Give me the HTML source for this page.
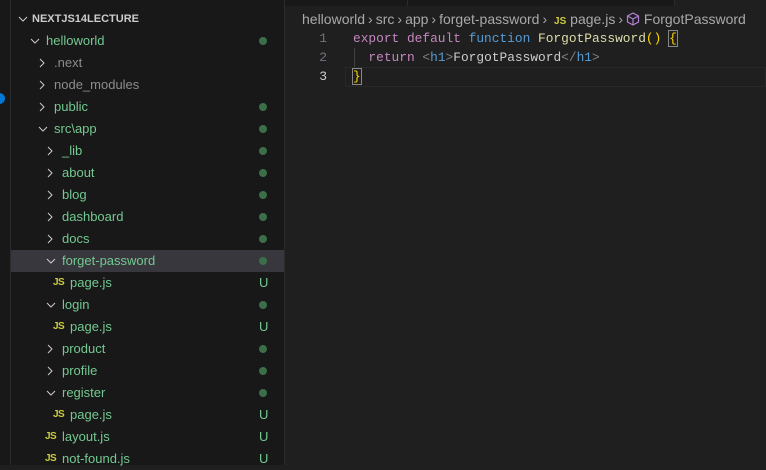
<!DOCTYPE html>
<html><head><meta charset="utf-8"><style>
*{margin:0;padding:0;box-sizing:border-box}
body{width:766px;height:465px;overflow:hidden;background:#1f1f1f;font-family:"Liberation Sans",sans-serif;position:relative}
#act{position:absolute;left:0;top:0;width:11px;height:465px;background:#181818;border-right:1px solid #2b2b2b}
#side{position:absolute;left:11px;top:0;width:274px;height:465px;background:#181818;border-right:1px solid #2b2b2b}
.r{position:absolute;left:0;width:273px;height:22px;line-height:22px;font-size:13px;color:#73c991;white-space:nowrap}
.r.g{color:#8c8c8c}
.r.sel{background:#37373d}
.ch{position:absolute;top:0;width:12px;height:22px}
.t{position:absolute;top:0}
.dot{position:absolute;left:248px;top:7px;width:8px;height:8px;border-radius:50%;background:#3c6e4a}
.u{position:absolute;left:248px;top:0;color:#73c991;font-size:13px}
.js{position:absolute;top:0;color:#cbcb41;font-weight:bold;font-size:10px;letter-spacing:-0.5px}
#ed{position:absolute;left:285px;top:0;right:0;bottom:0}
.code{position:absolute;font-family:"Liberation Mono",monospace;font-size:12.85px;height:19px;line-height:19px;white-space:pre}
.ln{position:absolute;width:42px;text-align:right;font-family:"Liberation Mono",monospace;font-size:13px;color:#6e7681;line-height:19px}
.bc span{margin:0 3px}
</style></head><body>
<div id="act"><div style="position:absolute;left:-6px;top:93px;width:11px;height:11px;border-radius:50%;background:#0078d4"></div></div>
<div id="side">
<div class="r" style="top:8px;color:#ccc;font-weight:bold;font-size:11px"><svg class="ch" style="left:6px" viewBox="0 0 12 22"><path d="M2 9l4 4 4-4" stroke="#ccc" fill="none"/></svg><span class="t" style="left:21px">NEXTJS14LECTURE</span></div>
<div id="rows"></div>
</div>
<div id="ed">
<div style="position:absolute;left:0;top:0;width:390px;height:6px;background:#181818;border-right:1px solid #2b2b2b"></div>
<div style="position:absolute;left:122px;top:0;width:1px;height:6px;background:#2b2b2b"></div>
<div class="bc" style="position:absolute;left:17px;top:10px;font-size:14px;color:#a9a9a9;white-space:nowrap;line-height:18px">helloworld<span>›</span>src<span>›</span>app<span>›</span>forget-password<span>›</span> <b style="color:#cbcb41;font-size:10px">JS</b> page.js<span>›</span><svg width="14" height="14" viewBox="0 0 14 14" style="vertical-align:-2px"><path d="M7 1l5.5 3v6L7 13 1.5 10V4z M1.5 4L7 7l5.5-3 M7 7v6" stroke="#b180d7" fill="none" stroke-width="1.2"/></svg> ForgotPassword</div>
<div style="position:absolute;left:60px;right:0;top:67px;height:20px;border:1px solid #282828"></div>
<div class="ln" style="left:0;top:29px">1</div>
<div class="ln" style="left:0;top:48px">2</div>
<div class="ln" style="left:0;top:67px;color:#ccc">3</div>
<div style="position:absolute;left:69px;top:48px;width:1px;height:19px;background:#404040"></div>
<div class="code" style="left:68px;top:29px"><span style="color:#c586c0">export default</span> <span style="color:#569cd6">function</span> <span style="color:#dcdcaa">ForgotPassword</span><span style="color:#ffd700">()</span> <span style="color:#ffd700;outline:1px solid #888">{</span></div>
<div class="code" style="left:68px;top:48px">  <span style="color:#c586c0">return</span> <span style="color:#808080">&lt;</span><span style="color:#569cd6">h1</span><span style="color:#808080">&gt;</span><span style="color:#ccc">ForgotPassword</span><span style="color:#808080">&lt;/</span><span style="color:#569cd6">h1</span><span style="color:#808080">&gt;</span></div>
<div class="code" style="left:68px;top:67px"><span style="color:#ffd700;outline:1px solid #888">}</span></div>
</div>
<script>
var rows=[
["helloworld",40,18,35,"v","dot",0],
[".next",62,26,43,">","",1],
["node_modules",84,26,43,">","",1],
["public",106,26,43,">","dot",0],
["src\\app",128,26,43,"v","dot",0],
["_lib",150,34,51,">","dot",0],
["about",172,34,51,">","dot",0],
["blog",194,34,51,">","dot",0],
["dashboard",216,34,51,">","dot",0],
["docs",238,34,51,">","dot",0],
["forget-password",260,34,51,"v","dot",0,1],
["page.js",282,42,59,"js","u",0],
["login",304,34,51,"v","dot",0],
["page.js",326,42,59,"js","u",0],
["product",348,34,51,">","dot",0],
["profile",370,34,51,">","dot",0],
["register",392,34,51,"v","dot",0],
["page.js",414,42,59,"js","u",0],
["layout.js",436,34,51,"js","u",0],
["not-found.js",458,34,51,"js","u",0]];
var h="";
rows.forEach(function(r){
var c="r"+(r[6]?" g":"")+(r[7]?" sel":"");
var icon="";
if(r[4]=="v")icon='<svg class="ch" style="left:'+r[2]+'px" viewBox="0 0 12 22"><path d="M2 9l4 4 4-4" stroke="#ccc" fill="none"/></svg>';
else if(r[4]==">")icon='<svg class="ch" style="left:'+r[2]+'px" viewBox="0 0 12 22"><path d="M3 7l4 4-4 4" stroke="#ccc" fill="none"/></svg>';
else icon='<span class="js" style="left:'+r[2]+'px">JS</span>';
var m=r[5]=="dot"?'<div class="dot"></div>':r[5]=="u"?'<span class="u">U</span>':"";
h+='<div class="'+c+'" style="top:'+(r[1]-10)+'px">'+icon+'<span class="t" style="left:'+r[3]+'px">'+r[0]+'</span>'+m+'</div>';
});
document.getElementById("rows").innerHTML=h;
</script>
</body></html>
